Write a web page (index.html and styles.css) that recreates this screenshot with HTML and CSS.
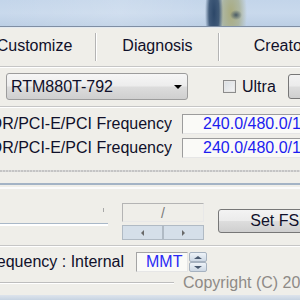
FILE: index.html
```html
<!DOCTYPE html>
<html lang="en">
<head>
    <meta charset="UTF-8">
    <title>Clock Generator</title>
    <link rel="stylesheet" href="styles.css">
</head>
<body>
    <div class="banner"></div>

    <nav class="tabs">
        <span class="tab">Customize</span>
        <span class="sep"></span>
        <span class="tab">Diagnosis</span>
        <span class="sep"></span>
        <span class="tab">Creator</span>
    </nav>
    <div class="rule"></div>

    <div class="pll-row">
        <div class="combo">
            <span class="combo-text">RTM880T-792</span>
            <span class="combo-arrow"></span>
        </div>
        <label class="check">
            <span class="box"></span>
            <span>Ultra</span>
        </label>
        <button class="btn btn-side"></button>
    </div>
    <div class="rule"></div>

    <div class="freq-row">
        <div class="freq-label"><span>DDR/PCI-E/PCI Frequency</span></div>
        <div class="freq-value">240.0/480.0/160.0</div>
    </div>
    <div class="freq-row second">
        <div class="freq-label"><span>DDR/PCI-E/PCI Frequency</span></div>
        <div class="freq-value">240.0/480.0/160.0</div>
    </div>

    <div class="dots"></div>
    <div class="divider"></div>
    <div class="divider-light"></div>

    <div class="tuner">
        <div class="track">
            <div class="tick"></div>
            <div class="track-line"></div>
        </div>
        <div class="stepper">
            <div class="stepper-display">/</div>
            <div class="steps">
                <span class="step"><i class="tri left"></i></span>
                <span class="step"><i class="tri right"></i></span>
            </div>
        </div>
        <button class="btn btn-set">Set FSB</button>
    </div>
    <div class="rule"></div>

    <div class="source-row">
        <div class="freq-label short"><span>FSB Frequency : Internal</span></div>
        <div class="mmt">MMT</div>
        <div class="spin">
            <span class="spin-btn"><i class="tri up"></i></span>
            <span class="spin-btn"><i class="tri down"></i></span>
        </div>
    </div>

    <div class="copy-row">
        <div class="copy-line"></div>
        <span class="copyright">Copyright (C) 2009</span>
    </div>
    <div class="statusbar"></div>
</body>
</html>
```

FILE: styles.css
```css
* {
    margin: 0;
    padding: 0;
    box-sizing: border-box;
}

body {
    width: 300px;
    height: 300px;
    overflow: hidden;
    background: #efeee9;
    font-family: 'Liberation Sans', Arial, sans-serif;
    font-size: 16px;
    line-height: 18px;
    color: #10102a;
}

/* rows are wider than the window, nothing should squeeze */
.tabs > *,
.pll-row > *,
.freq-row > *,
.tuner > *,
.source-row > *,
.copy-row > * {
    flex-shrink: 0;
}

.banner {
    height: 27px;
    border-bottom: 1px solid #7f8ea3;
    background:
        radial-gradient(ellipse 6px 5px at 236px 15px, rgba(50,70,90,0.8) 0%, rgba(50,70,90,0) 100%),
        radial-gradient(ellipse 9px 40px at 214px 13px, #2c4768 0%, rgba(44,71,104,0.85) 55%, rgba(44,71,104,0) 100%),
        radial-gradient(ellipse 16px 40px at 231px 13px, #a9ab7e 0%, rgba(165,172,140,0.75) 55%, rgba(165,172,140,0) 100%),
        linear-gradient(90deg, rgba(255,255,255,0) 0%, rgba(255,255,255,0.15) 40%, rgba(255,255,255,0) 70%),
        linear-gradient(180deg, #c3d5ea 0%, #c9d9ec 50%, #bccfe5 100%);
}

.tabs {
    display: flex;
    height: 39px;
    padding-top: 5px;
    margin-left: -26px;
    border-top: 1px solid #e4eaf0;
}

.tab {
    width: 121px;
    text-align: center;
    padding-top: 4px;
    white-space: nowrap;
}

.sep {
    width: 2px;
    height: 28px;
    border-left: 1px solid #b4b4b4;
    border-right: 1px solid #fff;
}

.rule {
    height: 2px;
    border-top: 1px solid #c6c6c6;
    border-bottom: 1px solid #fff;
}

.pll-row {
    display: flex;
    align-items: center;
    height: 27px;
    margin-top: 5px;
    margin-bottom: 6px;
}

.combo {
    display: flex;
    align-items: center;
    justify-content: space-between;
    width: 182px;
    height: 27px;
    margin-left: 6px;
    padding: 0 4px 0 4px;
    border: 1px solid #9c9c9c;
    border-radius: 3px;
    background: linear-gradient(180deg, #f6f6f6 0%, #ececec 48%, #dcdcdc 52%, #cfcfcf 100%);
}

.combo-arrow {
    width: 0;
    height: 0;
    margin-right: 1px;
    border-left: 4px solid transparent;
    border-right: 4px solid transparent;
    border-top: 4px solid #000;
}

.check {
    display: flex;
    align-items: center;
    gap: 6px;
    width: 65px;
    margin-left: 35px;
}

.box {
    width: 13px;
    height: 13px;
    border: 1px solid #8c8c8c;
    background: linear-gradient(135deg, #d8dde2, #f4f4f4);
    box-shadow: inset 0 0 0 1px #e6e6e6;
}

.btn {
    font-family: inherit;
    font-size: 16px;
    color: #10102a;
    border: 1px solid #777;
    border-radius: 3px;
    background: linear-gradient(180deg, #f3f3f3 0%, #ebebeb 48%, #dddddd 52%, #cfcfcf 100%);
}

.btn-side {
    align-self: flex-end;
    width: 40px;
    height: 25px;
    margin-bottom: 1px;
}

.freq-row {
    display: flex;
    height: 20px;
    margin-top: 6px;
}

.freq-row.second {
    margin-top: 4px;
}

.freq-label {
    display: flex;
    justify-content: flex-end;
    align-items: center;
    width: 172px;
    overflow: hidden;
    white-space: nowrap;
}

.freq-label.short {
    width: 124px;
}

.freq-value {
    width: 130px;
    margin-left: 10px;
    padding-left: 20px;
    border: 1px solid;
    border-color: #9c9c9c #e6e6e6 #e6e6e6 #9c9c9c;
    background: #fafaf7;
    color: #1c1cf0;
    white-space: nowrap;
    overflow: hidden;
}

.dots {
    height: 2px;
    margin-top: 12px;
    background: repeating-linear-gradient(90deg, #c4c4c4 0 2px, #dadada 2px 3px);
}

.divider {
    height: 2px;
    margin-top: 11px;
    background: #a3b3c5;
}

.divider-light {
    height: 2px;
    margin-top: 2px;
    background: #fbfbfb;
}

.tuner {
    display: flex;
    align-items: flex-start;
    height: 56px;
    padding-top: 14px;
}

.track {
    display: flex;
    flex-direction: column;
    width: 108px;
}

.tick {
    width: 1px;
    height: 4px;
    margin: 5px 0 0 103px;
    background: #a8a8a8;
}

.track-line {
    height: 3px;
    margin-top: 11px;
    border-top: 1px solid #a9b8c8;
    background: #fff;
}

.stepper {
    width: 82px;
    margin-left: 14px;
}

.stepper-display {
    height: 19px;
    border: 1px solid;
    border-color: #b4b4b4 #e8e8e8 #e8e8e8 #b4b4b4;
    text-align: center;
    font-size: 14px;
    color: #7a7a7a;
}

.steps {
    display: flex;
    margin-top: 3px;
}

.step {
    display: flex;
    align-items: center;
    justify-content: center;
    flex: 1;
    height: 15px;
    border: 1px solid #b0bac4;
    background: #d5dfe9;
}

.tri {
    width: 0;
    height: 0;
}

.tri.left {
    border-top: 3px solid transparent;
    border-bottom: 3px solid transparent;
    border-right: 3px solid #6a6a6a;
}

.tri.right {
    border-top: 3px solid transparent;
    border-bottom: 3px solid transparent;
    border-left: 3px solid #6a6a6a;
}

.tri.up {
    border-left: 4px solid transparent;
    border-right: 4px solid transparent;
    border-bottom: 3px solid #4a5a70;
}

.tri.down {
    border-left: 4px solid transparent;
    border-right: 4px solid transparent;
    border-top: 3px solid #4a5a70;
}

.btn-set {
    width: 124px;
    height: 24px;
    margin: 6px 0 0 14px;
}

.source-row {
    display: flex;
    height: 20px;
    margin-top: 5px;
}

.mmt {
    width: 52px;
    margin-left: 12px;
    padding-left: 9px;
    border: 1px solid;
    border-color: #a4a4a4 #e6e6e6 #e6e6e6 #a4a4a4;
    background: #fafaf7;
    color: #2a2af5;
}

.spin {
    display: flex;
    flex-direction: column;
    width: 18px;
    margin-left: 1px;
}

.spin-btn {
    display: flex;
    align-items: center;
    justify-content: center;
    flex: 1;
    border: 1px solid #a6b2c0;
    border-radius: 2px;
    background: linear-gradient(180deg, #eef3f8, #cdd8e4);
}

.copy-row {
    display: flex;
    align-items: center;
    height: 18px;
    margin-top: 2px;
}

.copy-line {
    width: 174px;
    height: 2px;
    border-top: 1px solid #bdbdbd;
    border-bottom: 1px solid #fff;
}

.copyright {
    margin-left: 9px;
    color: #8e8a86;
    white-space: nowrap;
}

.statusbar {
    height: 8px;
    margin-top: 3px;
    background: linear-gradient(180deg, #dde4ec, #b9c9dc);
}
```
